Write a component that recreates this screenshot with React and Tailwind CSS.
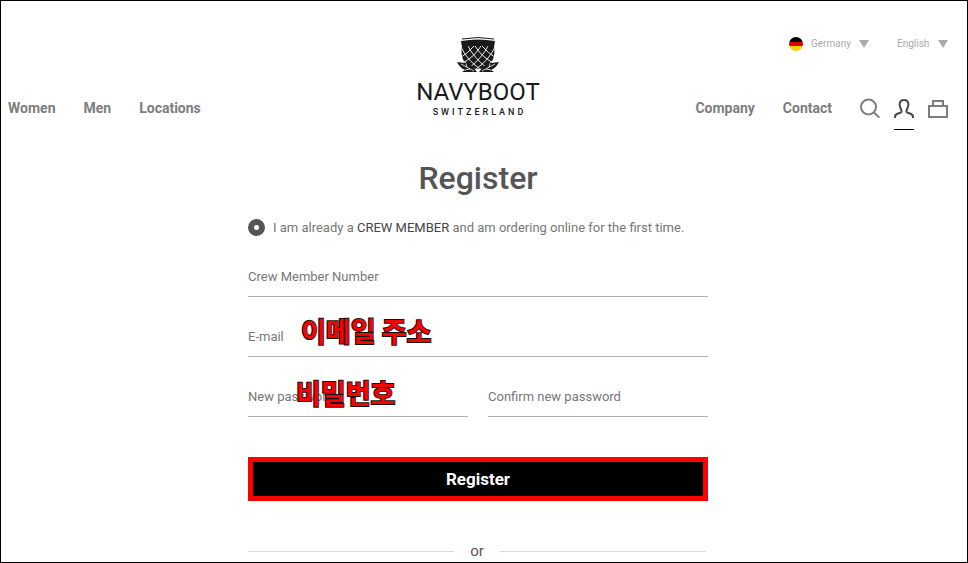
import React, { useState } from 'react';

const Thistle = () => (
  <svg width="48" height="40" viewBox="0 0 48 40" aria-hidden="true">
    <defs>
      <clipPath id="bulb">
        <path d="M8 11 Q24 8 40 11 C42 22 37 33 24 33 C11 33 6 22 8 11Z" />
      </clipPath>
    </defs>
    <path d="M8 3 Q24 0 40 3" fill="none" stroke="#1a1a1a" strokeWidth="1" />
    <path d="M7 5 Q24 2 41 5 L40 11 C42 22 37 33 24 33 C11 33 6 22 8 11Z" fill="#1a1a1a" />
    <g clipPath="url(#bulb)" fill="none" stroke="#fff" strokeWidth="0.9">
      <path d="M3 15 Q8 25 18 33 M7 11 Q13 24 26 33 M14 10 Q20 22 33 32 M21 10 Q27 20 39 27 M28 10 Q34 17 42 22" />
      <path d="M45 15 Q40 25 30 33 M41 11 Q35 24 22 33 M34 10 Q28 22 15 32 M27 10 Q21 20 9 27 M20 10 Q14 17 6 22" />
    </g>
    <g fill="#1a1a1a">
      <path d="M3 26 L11 27 Q18 28 23 36 L8 36 L11 34 Q6 32 3 26Z" />
      <path d="M45 26 L37 27 Q30 28 25 36 L40 36 L37 34 Q42 32 45 26Z" />
    </g>
    <g fill="none" stroke="#fff" strokeWidth="0.8">
      <path d="M7 28 L20 35 M12 28 L13 31 M11 34 L16 33" />
      <path d="M41 28 L28 35 M36 28 L35 31 M37 34 L32 33" />
    </g>
  </svg>
);

const GermanFlag = () => (
  <svg width="14" height="14" viewBox="0 0 14 14" aria-hidden="true">
    <defs>
      <clipPath id="flag">
        <circle cx="7" cy="7" r="7" />
      </clipPath>
    </defs>
    <g clipPath="url(#flag)">
      <rect width="14" height="5" fill="#000" />
      <rect y="5" width="14" height="4" fill="#d00" />
      <rect y="9" width="14" height="5" fill="#ffce00" />
    </g>
  </svg>
);

const Caret = () => (
  <svg width="10" height="8" viewBox="0 0 10 8" aria-hidden="true" className="pointer-events-none">
    <path d="M0 0H10L5 8Z" fill="#aaa" />
  </svg>
);

const SearchIcon = () => (
  <svg width="20" height="20" viewBox="0 0 20 20" fill="none" stroke="#7d7d7d" strokeWidth="2">
    <circle cx="8.500" cy="9" r="7.500" />
    <path d="M13.800 14.300L19.300 19.600" />
  </svg>
);

const UserIcon = () => (
  <svg width="20" height="20" viewBox="0 0 20 20" fill="none" stroke="#4a4a4a" strokeWidth="2">
    <path d="M1 20V18.800C1 17 2 16.400 3.500 15.800C5.500 15 7.600 14.800 7.600 13.200C7.600 11.500 5.600 9.500 5.600 6.700C5.600 3.800 7.300 2 10 2S14.400 3.800 14.400 6.700C14.400 9.500 12.400 11.500 12.400 13.200C12.400 14.800 14.500 15 16.500 15.800C18 16.400 19 17 19 18.800V20" />
  </svg>
);

const BagIcon = () => (
  <svg width="20" height="20" viewBox="0 0 20 20" fill="none" stroke="#7d7d7d" strokeWidth="2">
    <path d="M1 8H19V19H1Z" />
    <path d="M5 8V3H15V8" />
  </svg>
);

const Picker = ({ label, options }) => (
  <div className="flex items-center gap-2">
    <select
      aria-label={label}
      className="appearance-none bg-transparent text-[10px] leading-4 text-[#aaa] focus:outline-none"
    >
      {options.map((option) => (
        <option key={option}>{option}</option>
      ))}
    </select>
    <Caret />
  </div>
);

const Field = ({ id, label, type = 'text', note, noteClass }) => (
  <div className="relative flex h-10 items-center border-b border-[#b0b0b0]">
    <label htmlFor={id} className="text-[13px] text-[#777]">{label}</label>
    <input id={id} type={type} className="ml-2 w-0 flex-1 bg-transparent text-[13px] text-[#555] focus:outline-none" />
    {note && (
      <span
        className={`pointer-events-none absolute whitespace-nowrap font-['Noto_Sans_CJK_KR',sans-serif] text-[27px] leading-8 font-bold text-[#f00] [-webkit-text-stroke:2px_#111] [paint-order:stroke_fill] ${noteClass}`}
      >
        {note}
      </span>
    )}
  </div>
);

const App = () => {
  const [isMember, setIsMember] = useState(true);

  return (
    <div className="min-h-screen border border-black bg-white pr-[19px] pl-[7px] font-[Roboto,sans-serif]">
      <header className="grid grid-cols-[1fr_auto_1fr] items-end pt-[35px]">
        <nav className="flex h-8 gap-7 text-sm font-bold text-[#7d7d7d]">
          <a href="#women">Women</a>
          <a href="#men">Men</a>
          <a href="#locations">Locations</a>
        </nav>

        <a href="#home" className="flex flex-col items-center pb-[14px] text-[#1a1a1a]">
          <Thistle />
          <span className="text-2xl leading-8">NAVYBOOT</span>
          <span className="pl-[3px] text-[9px] leading-2 font-medium tracking-[3px]">SWITZERLAND</span>
        </a>

        <div className="flex flex-col items-end justify-between self-stretch">
          <div className="flex gap-7">
            <div className="flex items-center gap-2">
              <GermanFlag />
              <Picker label="Country" options={['Germany']} />
            </div>
            <Picker label="Language" options={['English']} />
          </div>
          <div className="flex h-8 gap-7 text-sm font-bold text-[#7d7d7d]">
            <a href="#company">Company</a>
            <a href="#contact">Contact</a>
            <div className="flex gap-[14px]">
              <button type="button" aria-label="Search" className="h-5"><SearchIcon /></button>
              <button type="button" aria-label="Account" className="h-8 border-b border-black pb-3"><UserIcon /></button>
              <button type="button" aria-label="Bag" className="h-5"><BagIcon /></button>
            </div>
          </div>
        </div>
      </header>

      <main className="mx-auto max-w-[460px] pt-7">
        <h1 className="text-center text-[32px] leading-10 font-medium text-[#555]">Register</h1>

        <form onSubmit={(e) => e.preventDefault()}>
          <div className="mt-5 flex items-center gap-2">
            <input
              id="member"
              type="radio"
              checked={isMember}
              onChange={() => setIsMember(true)}
              className="size-[17px] appearance-none rounded-full border-[6px] border-[#555] bg-white"
            />
            <label htmlFor="member" className="text-[13px] leading-[19px] text-[#777]">
              I am already a <span className="text-[#444]">CREW MEMBER</span> and am ordering online for the first time.
            </label>
          </div>

          <div className="mt-5 grid grid-cols-2 gap-5">
            <div className="col-span-2">
              <Field id="number" label="Crew Member Number" />
            </div>
            <div className="col-span-2">
              <Field id="email" label="E-mail" type="email" note="이메일 주소" noteClass="-top-0.5 left-[53px]" />
            </div>
            <Field id="password" label="New password" type="password" note="비밀번호" noteClass="top-0 left-12" />
            <Field id="confirm" label="Confirm new password" type="password" />
          </div>

          <button
            type="submit"
            className="mt-10 h-11 w-full border-[5px] border-[#f00] bg-black text-[17px] leading-6 font-bold text-white"
          >
            Register
          </button>
        </form>

        <div className="mt-10 flex items-center gap-4 pr-0.5 text-[15px] leading-5 text-[#555]">
          <hr className="flex-1 border-[#d8d8d8]" />
          or
          <hr className="flex-1 border-[#d8d8d8]" />
        </div>
      </main>
    </div>
  );
};

export default App;
